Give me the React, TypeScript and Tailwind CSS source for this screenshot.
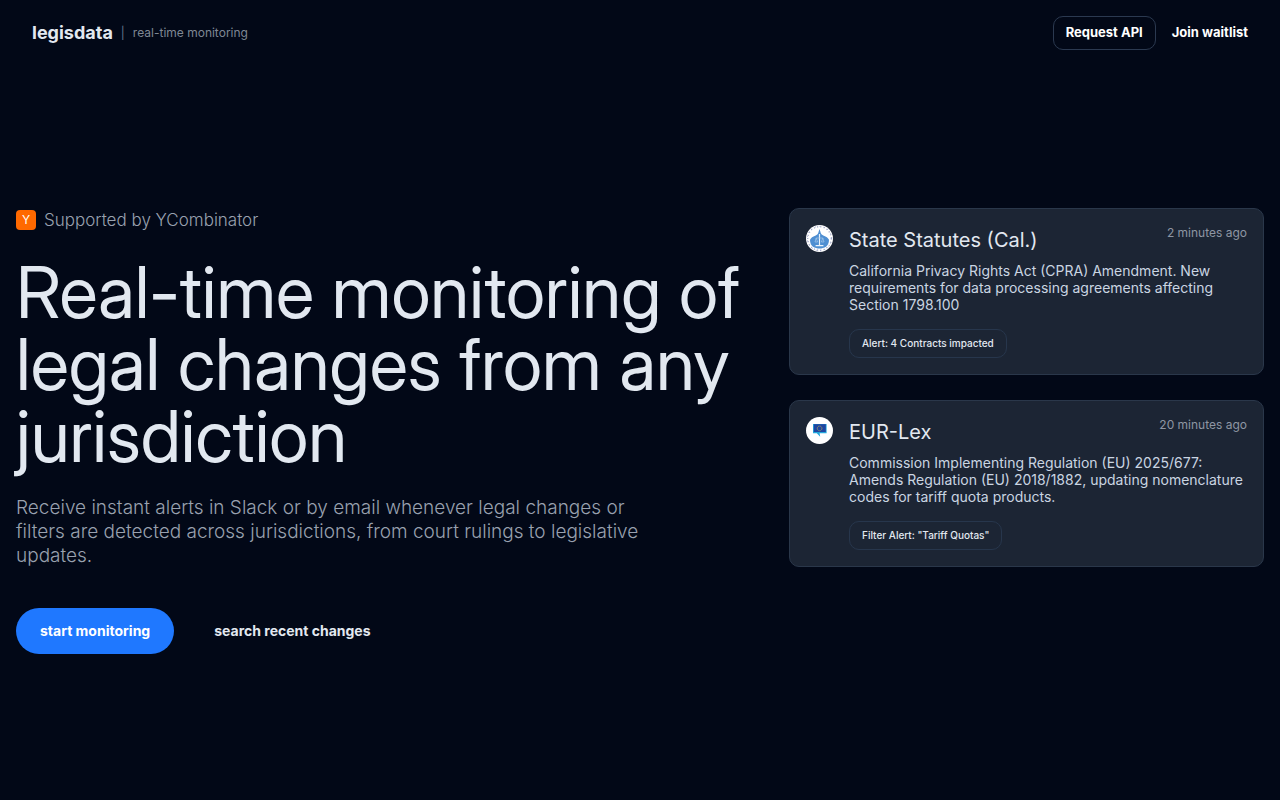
import React from 'react';

const CaliforniaSeal: React.FC = () => (
  <svg viewBox="0 0 27 27" className="h-[27px] w-[27px] shrink-0" aria-hidden="true">
    <circle cx="13.5" cy="13.5" r="13.5" fill="#ffffff" />
    <circle cx="13.5" cy="13.5" r="11.8" fill="none" stroke="#a9aecb" strokeWidth="1.4" strokeDasharray="1.1 2.2" />
    <circle cx="13.5" cy="13.5" r="12.2" fill="none" stroke="#7f87b4" strokeWidth="0.8" strokeDasharray="0.8 3.6" />
    <path
      d="M13.5 4 L14.4 6.8 C14.5 8.8 16 9.8 17.8 10.8 C20.2 11.6 22 12.8 23 14.8 C23 18 21.8 20.4 20 21.8 C16.4 24.2 10.6 24.2 7 21.8 C5.2 20.4 4 18 4 14.8 C5 12.8 6.8 11.6 9.2 10.8 C11 9.8 12.5 8.8 12.6 6.8 Z"
      fill="#4f8fd2"
    />
    <path d="M13.5 9 V20.4 M9.6 20.6 H17.4" stroke="#eaf3fb" strokeWidth="1.2" fill="none" />
    <path d="M10.2 13 H16.8 M10.2 13 L9 17 H11.6 Z M16.8 13 L15.4 17 H18 Z" fill="none" stroke="#a5c7ea" strokeWidth="0.7" />
  </svg>
);

const EurLexLogo: React.FC = () => (
  <svg viewBox="0 0 27 27" className="h-[27px] w-[27px] shrink-0" aria-hidden="true">
    <circle cx="13.5" cy="13.5" r="13.5" fill="#ffffff" />
    <path d="M7 7 H20.6 V16.2 H13.6 L14.2 19.8 L10.8 16.2 H7 Z" fill="#22a7dd" />
    <rect x="7.8" y="7.2" width="12" height="7.8" fill="#1f45a0" />
    <circle cx="13.6" cy="11.4" r="2.3" fill="none" stroke="#b5a650" strokeWidth="0.9" strokeDasharray="0.8 0.4" />
  </svg>
);

const alerts = [
  {
    icon: CaliforniaSeal,
    source: 'State Statutes (Cal.)',
    time: '2 minutes ago',
    text: 'California Privacy Rights Act (CPRA) Amendment. New requirements for data processing agreements affecting Section 1798.100',
    tag: 'Alert: 4 Contracts impacted'
  },
  {
    icon: EurLexLogo,
    source: 'EUR-Lex',
    time: '20 minutes ago',
    text: 'Commission Implementing Regulation (EU) 2025/677: Amends Regulation (EU) 2018/1882, updating nomenclature codes for tariff quota products.',
    tag: 'Filter Alert: "Tariff Quotas"'
  }
];

const App: React.FC = () => {
  return (
    <div className="flex min-h-screen flex-col bg-[#020817] font-['Inter',sans-serif] text-slate-200">
      <header className="flex items-center justify-between px-8 py-4">
        <div className="flex items-center gap-2">
          <span className="text-lg font-bold">legisdata</span>
          <span className="text-xs text-slate-500">|</span>
          <span className="text-xs text-[#7f8794]">real-time monitoring</span>
        </div>
        <nav className="flex items-center gap-4">
          <button type="button" className="h-[34px] rounded-[10px] border border-[#2b3950] px-3 text-[13px] font-bold text-white">
            Request API
          </button>
          <a href="#waitlist" className="text-[13px] font-bold text-white">
            Join waitlist
          </a>
        </nav>
      </header>

      <main className="grid flex-1 content-center items-start gap-10 px-4 pb-1 lg:grid-cols-[minmax(0,1fr)_475px]">
        {/* Hero copy */}
        <section>
          <div className="flex items-center gap-2">
            <span className="flex h-5 w-5 items-center justify-center rounded bg-[#ff6900] text-xs text-white">Y</span>
            <span className="text-[17px] leading-6 font-light text-gray-400">Supported by YCombinator</span>
          </div>
          <h1 className="mt-6 font-['Inter_Display','Inter',sans-serif] text-[71px] leading-[72px] font-normal">
            Real-time monitoring of legal changes from any jurisdiction
          </h1>
          <p className="mt-6 max-w-[640px] text-[19px] leading-6 font-light text-gray-400">
            Receive instant alerts in Slack or by email whenever legal changes or filters are detected across jurisdictions, from court rulings to legislative updates.
          </p>
          <div className="mt-10 flex gap-4">
            <button type="button" className="h-[46px] rounded-full bg-[#1f78ff] px-6 text-sm font-bold text-white">
              start monitoring
            </button>
            <button type="button" className="h-[46px] rounded-full px-6 text-sm font-bold">
              search recent changes
            </button>
          </div>
        </section>

        {/* Alert feed */}
        <section className="flex flex-col gap-[25px]">
          {alerts.map((alert) => {
            const Icon = alert.icon;
            return (
              <article key={alert.source} className="flex gap-4 rounded-[10px] border border-[#2a374a] bg-[#1c2534] p-4">
                <Icon />
                <div className="flex-1">
                  <div className="flex items-start justify-between">
                    <h2 className="pt-[3px] text-xl leading-6">{alert.source}</h2>
                    <time className="text-xs text-[#8e96a3]">{alert.time}</time>
                  </div>
                  <p className="mt-[10px] text-sm leading-[17px] text-slate-300">{alert.text}</p>
                  <span className="mt-4 inline-flex h-[29px] items-center rounded-[10px] border border-[#27364c] px-3 text-[10px] font-medium">
                    {alert.tag}
                  </span>
                </div>
              </article>
            );
          })}
        </section>
      </main>
    </div>
  );
};

export default App;
